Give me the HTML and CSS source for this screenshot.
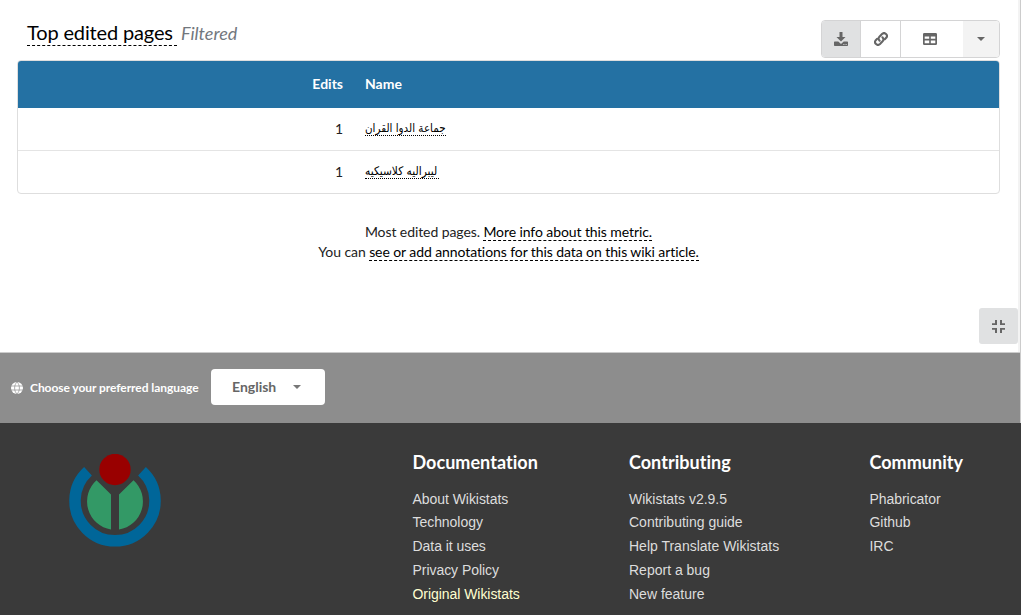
FILE: index.html
```html
<!DOCTYPE html>
<html lang="en">
<head>
<meta charset="utf-8">
<title>Wikistats</title>
<link rel="stylesheet" href="styles.css">
</head>
<body>
<div class="page">
  <main class="metric">
    <header class="metric-head">
      <h1 class="title"><a class="title-link">Top edited pages&nbsp;</a><em class="filtered">Filtered</em></h1>
      <div class="toolbar">
        <button class="tool active" aria-label="Download"><svg width="14" height="14" viewBox="0 0 14 14"><path d="M5.500 0h3v5h3L7 9.500 2.500 5h3zM.7 9.500h3.600L7 12l2.700-2.500h3.600q.7 0 .7.700v3.100q0 .7-.7.700H.7q-.7 0-.7-.7v-3.100q0-.7.7-.7z"/><path class="cut" d="M9.400 12h1v1h-1zM11.600 12h1v1h-1z"/></svg></button>
        <button class="tool link" aria-label="Link"><svg width="14" height="14" viewBox="0 0 14 14" fill="none" stroke="#666" stroke-width="2.100" stroke-linecap="round"><path d="M5.600 8.700C4.200 7.300 4.400 5.700 5.400 4.700L8 2c2.700-2.500 6.500 1 4.200 3.800L10.800 7.200"/><path d="M8.400 5.300c1.400 1.400 1.200 3 .2 4L6 12c-2.700 2.500-6.500-1-4.200-3.800L3.200 6.800"/></svg></button>
        <button class="tool table-pick" aria-label="Table"><svg width="14" height="12" viewBox="0 0 14 12"><path fill-rule="evenodd" d="M1.300 0h11.400Q14 0 14 1.300v9.400q0 1.300-1.300 1.300H1.300Q0 12 0 10.700V1.300Q0 0 1.300 0zM1.700 3.500v2.300h4.500V3.500zm6.100 0v2.300h4.500V3.500zM1.700 7.500v2.800h4.500V7.500zm6.100 0v2.800h4.500V7.500z"/></svg></button>
        <button class="tool more" aria-label="More"><i class="caret"></i></button>
      </div>
    </header>
    <table class="results">
      <thead><tr><th class="num">Edits</th><th>Name</th></tr></thead>
      <tbody>
        <tr><td class="num">1</td><td><a class="name" lang="arz">جماعة الدوا القران</a></td></tr>
        <tr><td class="num">1</td><td><a class="name second" lang="arz">ليبراليه كلاسيكيه</a></td></tr>
      </tbody>
    </table>
    <p class="about"><span class="line">Most edited pages. <a>More info about this metric.</a></span><span class="line">You can <a>see or add annotations for this data on this wiki article.</a></span></p>
    <button class="compress" aria-label="Compress"><svg width="13" height="13" viewBox="0 0 13 13"><path d="M3 0h2v5H0V3.300h3zM8 0h2v3.300h3V5H8zM0 8h5v5H3V9.700H0zM8 8h5v1.700h-3V13H8z"/></svg></button>
  </main>
  <section class="language">
    <svg class="globe" width="12" height="12" viewBox="0 0 12 12"><circle cx="6" cy="6" r="6" fill="#fff"/><path d="M0 4h12M0 8h12M6 0C2.800 3 2.800 9 6 12M6 0c3.200 3 3.200 9 0 12" fill="none" stroke="#8d8d8d" stroke-width=".7"/></svg>
    <span class="choose">Choose your preferred language</span>
    <button class="select"><span class="lang-name">English</span><i class="caret small"></i></button>
  </section>
  <footer class="footer">
    <svg class="logo" width="92" height="94" viewBox="0 0 92 94"><path d="M19 17.300A40 40 0 1 0 73 17.300" fill="none" stroke="#069" stroke-width="11.500"/><path d="M27.500 26.200 42 40.500V75.500A28.500 28.500 0 0 1 27.500 26.200zM64.500 26.200 50 40.500V75.500A28.500 28.500 0 0 0 64.500 26.200z" fill="#396"/><circle cx="46" cy="15.500" r="15.700" fill="#900"/></svg>
    <nav class="col docs"><h2>Documentation</h2><a>About Wikistats</a><a>Technology</a><a>Data it uses</a><a>Privacy Policy</a><a class="original">Original Wikistats</a></nav>
    <nav class="col contrib"><h2>Contributing</h2><a>Wikistats v2.9.5</a><a>Contributing guide</a><a>Help Translate Wikistats</a><a>Report a bug</a><a>New feature</a></nav>
    <nav class="col community"><h2>Community</h2><a>Phabricator</a><a>Github</a><a>IRC</a></nav>
  </footer>
</div>
</body>
</html>
```
FILE: styles.css
```css
* { box-sizing: border-box; }
body { margin: 0; background: #fff; color: #222; font: 14px/20px Lato, sans-serif; font-variant-ligatures: no-common-ligatures; overflow: hidden; }
button { border: 0; padding: 0; font: inherit; }
.page { width: 1021px; height: 615px; display: flex; flex-direction: column; }
.metric { width: 1021px; height: 352px; border-right: 1px solid #ccc; padding: 20px 0 0 17px; background: linear-gradient(#f3f3f3, #f3f3f3) right / 2px 100% no-repeat; display: flex; flex-direction: column; }
.metric-head { width: 983px; height: 40px; display: flex; justify-content: space-between; align-items: flex-start; }
.title { display: flex; margin: 0 0 0 10px; font-size: 20px; font-weight: 400; line-height: 25px; letter-spacing: -.15px; }
.title-link { height: 26px; border-bottom: 1px dashed #000; color: #000; width: 150px; white-space: nowrap; }
.filtered { margin-left: 4px; color: #72777d; font-size: 18px; line-height: 27px; letter-spacing: 0; white-space: nowrap; }
.toolbar { display: flex; width: 179px; height: 38px; border: 1px solid #d4d4d5; border-radius: 4px; overflow: hidden; }
.tool { display: flex; align-items: center; justify-content: center; background: #fff; fill: #666; }
.active { width: 38px; background: #e0e1e2; }
.cut { fill: #e0e1e2; }
.link { width: 40px; border-left: 1px solid #d4d4d5; }
.table-pick { width: 63px; border-left: 1px solid #d4d4d5; padding-right: 4px; }
.more { width: 36px; background: #f3f3f3; }
.caret { border: 4px solid transparent; border-top-color: #666; border-bottom: 0; }
.results { width: 983px; height: 134px; flex: none; border: 1px solid #dedede; border-radius: 4px; border-spacing: 0; table-layout: fixed; overflow: hidden; }
.results th { height: 47px; padding: 0 11px 2px; background: #2471a3; color: #fff; text-align: left; font-weight: 700; }
.results td { height: 42px; padding: 0 11px; }
.results tbody tr:last-child td { border-top: 1px solid #e4e4e4; height: 43px; }
.results .num { width: 336px; text-align: right; }
.name { display: block; height: 15px; margin-top: -1px; border-bottom: 1px dotted #000; color: #000; font: 11.5px/14px "DejaVu Sans Condensed", "DejaVu Sans", sans-serif; font-stretch: condensed; white-space: nowrap; width: 81px; }
.second { width: 74px; font-size: 11.8px; }
.about { width: 983px; margin: 28px 0 0; display: flex; flex-direction: column; align-items: center; letter-spacing: -.085px; }
.line { height: 20px; white-space: nowrap; }
.about a { display: inline-block; height: 19px; color: #000; border-bottom: 1px dashed #000; }
.compress { width: 39px; height: 36px; margin: 46px 2px 0 0; align-self: flex-end; background: #e0e1e2; border-radius: 3px; fill: #666; display: flex; align-items: center; justify-content: center; }
.language { height: 71px; background: #8d8d8d; border-top: 1px solid #ccc; border-right: 1px solid #ccc; display: flex; align-items: center; padding-left: 11px; color: #fff; }
.choose { width: 169px; margin: 0 12px 0 7px; font-size: 12px; font-weight: 700; letter-spacing: -.06px; white-space: nowrap; }
.select { width: 114px; height: 36px; margin-bottom: 2px; border-radius: 4px; background: #fff; color: #666; font-weight: 700; display: flex; align-items: center; padding-left: 21px; }
.lang-name { width: 61px; text-align: left; }
.small { border-top-color: #777; }
.footer { height: 192px; background: #3a3a3a; color: #ddd; display: grid; grid-template-columns: 343.5px 216.5px 240.5px 1fr; padding: 30px 0 0 69px; }
.logo { margin-top: 1px; }
.col { display: flex; flex-direction: column; font: 14px/23.8px "Liberation Sans", sans-serif; letter-spacing: -.05px; }
.contrib { letter-spacing: 0; }
.col h2 { margin: 0 0 15.500px; color: #fff; font: 700 18px/19px Lato, sans-serif; letter-spacing: .03px; }
.col a { white-space: nowrap; }
.original { color: #ffffd0; }
```
